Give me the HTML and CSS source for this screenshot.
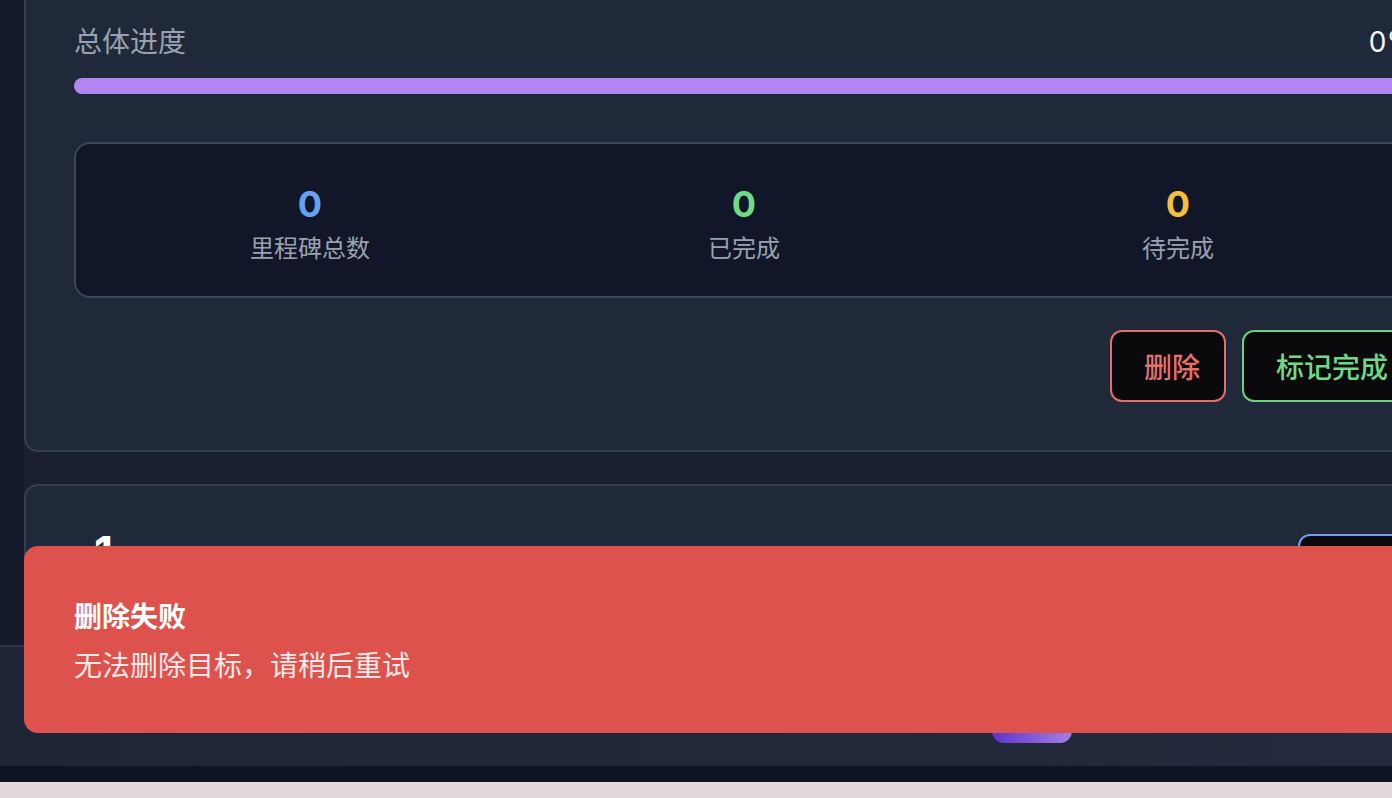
FILE: index.html
```html
<!DOCTYPE html>
<html lang="zh-CN">
<head>
<meta charset="utf-8">
<title>目标详情</title>
<link rel="stylesheet" href="styles.css">
</head>
<body>
<div class="page">
  <main class="main">
    <div class="content">
      <section class="card card-progress">
        <div class="progress-head">
          <span class="progress-label">总体进度</span>
          <span class="progress-value">0%</span>
        </div>
        <div class="progress-track"><div class="progress-fill" style="width:0%"></div></div>
        <div class="stats">
          <div class="stat">
            <div class="stat-num num-blue">0</div>
            <div class="stat-label">里程碑总数</div>
          </div>
          <div class="stat">
            <div class="stat-num num-green">0</div>
            <div class="stat-label">已完成</div>
          </div>
          <div class="stat">
            <div class="stat-num num-yellow">0</div>
            <div class="stat-label">待完成</div>
          </div>
        </div>
        <div class="actions">
          <button class="btn btn-red">删除</button>
          <button class="btn btn-green">标记完成</button>
        </div>
      </section>
      <section class="card card-milestones">
        <div class="ms-head">
          <h2 class="ms-title">1</h2>
          <button class="btn btn-blue">添加</button>
        </div>
      </section>
    </div>
  </main>
  <nav class="bottombar">
    <button class="nav-active" aria-label="当前"></button>
  </nav>
  <div class="edge"></div>
  <div class="backdrop"></div>
</div>
<div class="toast" role="alert">
  <div class="toast-title">删除失败</div>
  <div class="toast-body">无法删除目标，请稍后重试</div>
</div>
</body>
</html>
```
FILE: styles.css
```css
* { box-sizing: border-box; }
html, body {
  margin: 0;
  padding: 0;
  width: 1392px;
  height: 798px;
  overflow: hidden;
  background: #171c2d;
  font-family: "Inter", "Noto Sans CJK SC", "Noto Sans", sans-serif;
}
.page {
  display: flex;
  flex-direction: column;
  height: 798px;
}
.main {
  height: 645px;
  flex: none;
  overflow: hidden;
  background: #161b2b;
}
.content {
  margin-left: 24px;
  width: 1500px;
  min-height: 645px;
  background: #1a1f31;
  display: flex;
  flex-direction: column;
}
.card {
  width: 1440px;
  background: #202939;
  border: 2px solid #363f50;
  border-radius: 14px;
  padding: 48px;
}
.card-progress {
  margin-top: -28px;
}
.progress-head {
  display: flex;
  justify-content: space-between;
  align-items: center;
  height: 40px;
  font-size: 28px;
  line-height: 40px;
}
.progress-label { color: #9aa2b1; }
.progress-value { color: #f4f5f7; }
.progress-track {
  margin-top: 16px;
  height: 16px;
  border-radius: 8px;
  background: #b385f2;
  overflow: hidden;
}
.progress-fill { height: 100%; background: #9d6ef0; }
.stats {
  margin-top: 48px;
  background: #111729;
  border: 2px solid #3d4658;
  border-radius: 16px;
  padding: 38px 17px 29px;
  display: grid;
  grid-template-columns: repeat(3, 434px);
}
.stat {
  display: flex;
  flex-direction: column;
  align-items: center;
}
.stat-num {
  font-size: 36px;
  line-height: 44px;
  font-weight: 700;
}
.num-blue { color: #66a1f6; }
.num-green { color: #71da86; }
.num-yellow { color: #f4bf3e; }
.stat-label {
  margin-top: 5px;
  font-size: 24px;
  line-height: 36px;
  color: #9aa2b1;
}
.actions {
  margin-top: 32px;
  display: flex;
  justify-content: flex-end;
  gap: 16px;
}
.btn {
  font-family: "Noto Sans CJK SC", sans-serif;
  font-size: 28px;
  font-weight: 500;
  line-height: 40px;
  height: 72px;
  padding: 0 24px 0 32px;
  background: #0a0a0c;
  border: 2px solid;
  border-radius: 12px;
}
.btn-red { color: #e8706b; border-color: #e36f6a; }
.btn-green { color: #72d886; border-color: #6bd283; }
.btn-blue { color: #6aa2f5; border-color: #6a9ff2; }
.card-milestones {
  margin-top: 32px;
  min-height: 400px;
}
.ms-head {
  display: flex;
  justify-content: space-between;
  align-items: flex-start;
}
.ms-title {
  margin: -8px 0 0 20px;
  font-size: 44px;
  line-height: 1.2;
  font-weight: 700;
  color: #ffffff;
}
.bottombar {
  height: 121px;
  flex: none;
  border-top: 2px solid #2b3344;
  background: linear-gradient(90deg, #1e2536 0%, #222839 60%, #242a3d 100%);
  display: flex;
  align-items: flex-end;
  padding: 0 0 23px 992px;
}
.nav-active {
  width: 80px;
  height: 56px;
  border: none;
  border-radius: 12px;
  background: linear-gradient(90deg, #5f33cf 0%, #a47fe2 100%);
}
.edge {
  height: 16px;
  flex: none;
  background: #0f1424;
}
.backdrop {
  height: 16px;
  flex: none;
  background: #e2d9dd;
}
.toast {
  position: absolute;
  left: 24px;
  top: 546px;
  width: 1420px;
  height: 187px;
  background: #dd524c;
  border-radius: 14px;
  padding: 49px 50px;
  font-family: "Noto Sans CJK SC", sans-serif;
}
.toast-title {
  font-size: 28px;
  line-height: 40px;
  font-weight: 700;
  color: #ffffff;
}
.toast-body {
  margin-top: 9px;
  font-size: 28px;
  line-height: 40px;
  color: #fbe9e8;
}
```
